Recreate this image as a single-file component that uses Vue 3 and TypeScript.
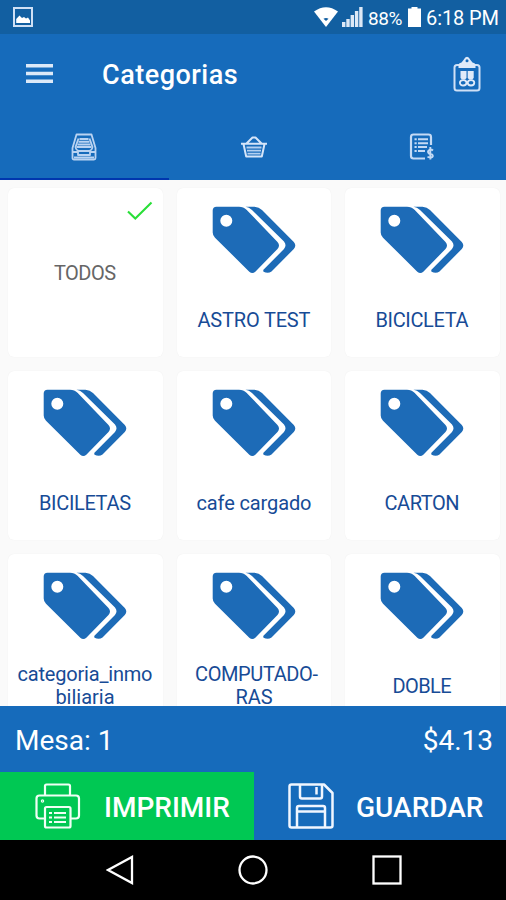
<script setup lang="ts">
interface Category {
  lines: string[]
  width: number
  shift?: number
}

const categories: Category[] = [
  { lines: ['ASTRO TEST'], width: 113 },
  { lines: ['BICICLETA'], width: 93 },
  { lines: ['BICILETAS'], width: 92 },
  { lines: ['cafe cargado'], width: 115 },
  { lines: ['CARTON'], width: 75 },
  { lines: ['categoria_inmo', 'biliaria'], width: 135 },
  { lines: ['COMPUTADO-', 'RAS'], width: 123, shift: 2.5 },
  { lines: ['DOBLE'], width: 59 },
]
</script>

<template>
  <div class="screen">
    <div class="status">
      <svg class="picture" width="20" height="20" viewBox="0 0 20 20">
        <rect x="1" y="1" width="18" height="18" fill="none" stroke="#cfe0f5" stroke-width="2" />
        <path d="M3.2 16V12L6.5 8.5 9 11l2-1 2 1.5 2-1 2 3V16z" fill="#fff" />
      </svg>
      <div class="status-right">
        <svg class="wifi" width="24" height="20" viewBox="0 0 24 20">
          <path d="M0 4.5Q12-4 24 4.5L12 20z" fill="#fff" />
          <path d="M9.5 11.8Q12 10 14.500 11.800L12 14z" fill="#125fa1" />
        </svg>
        <svg class="signal" width="21" height="20" viewBox="0 0 21 20" fill="#dce8f6">
          <path d="M0 15h3.400v5H0zM4.300 12h3.400v8h-3.400zM8.600 8h3.400v12h-3.400zM12.900 4h3.400v16h-3.400zM17.200 0h3.400v20h-3.400z" />
        </svg>
        <span class="percent">88%</span>
        <svg class="battery" width="13" height="20" viewBox="0 0 13 20">
          <path d="M3.500 0h6v1.500H13V20H0V1.500h3.500z" fill="#fff" />
        </svg>
        <span class="clock">6:18 PM</span>
      </div>
    </div>

    <header class="bar">
      <svg class="burger" width="27" height="20" viewBox="0 0 27 20" fill="#dce9f8">
        <path d="M0 0h27v3.400H0zM0 7.800h27v3.400H0zM0 15.600h27V19H0z" />
      </svg>
      <h1>Categorias</h1>
      <svg class="clipboard" width="28" height="36" viewBox="0 0 28 36">
        <rect x="1.500" y="9" width="25" height="25.500" rx="2.500" fill="none" stroke="#cfe0f6" stroke-width="2" />
        <path d="M5.500 12V8.500Q6 7 8.500 6.500L10.500 4Q14-2.500 17.500 4l2 2.500Q22 7 22.500 8.500V12z" fill="#dfeaf9" />
        <circle cx="14" cy="4.800" r="1.500" fill="#166bbb" />
        <path d="M7.500 15h6v7l-1.500 1.500H9L7.500 22zM14.700 15h6v7l-1.500 1.500h-3L14.700 22z" fill="#dfeaf9" />
        <ellipse cx="10.200" cy="26.800" rx="3.300" ry="2.700" fill="none" stroke="#dfeaf9" stroke-width="1.800" />
        <ellipse cx="18" cy="26.800" rx="3.300" ry="2.700" fill="none" stroke="#dfeaf9" stroke-width="1.800" />
      </svg>
    </header>

    <nav class="tabs">
      <div class="tab active">
        <svg width="26" height="28" viewBox="0 0 26 28" fill="none" stroke="#b9d3f2" stroke-width="1.800" stroke-linejoin="round">
          <path d="M5.500 1.500h15L24.500 15v10q0 1.500-1.500 1.500H3q-1.500 0-1.500-1.500V15z" />
          <path d="M8.500 6h9M7.500 8.700h11M6.500 11.400h13M5.500 14h15" stroke-width="2" />
          <path d="M7.500 5.500 4.500 14q.5 4 5 4h7q4.500 0 5-4l-3-8.500M2 19h5v3h12v-3h5M3 24.500h20" />
        </svg>
      </div>
      <div class="tab">
        <svg class="basket" width="28" height="24" viewBox="0 0 28 24" fill="none" stroke="#d5e5f9" stroke-width="2" stroke-linejoin="round">
          <path d="M1 8.800h26M6.500 8.500l6-6h3l6 6M3.500 9l2.700 12.500h15.600L24.500 9" />
          <path d="M6.500 12.500h15M7 15.600h14M7.500 18.700h13" stroke="#b3d0f1" stroke-width="1.800" />
        </svg>
      </div>
      <div class="tab">
        <svg width="26" height="28" viewBox="0 0 26 28" fill="none" stroke="#c4daf5" stroke-width="1.900">
          <path d="M22 12V4q0-2.500-2.500-2.500h-15Q2 1.500 2 4v19q0 2.500 2.500 2.500H16" stroke-width="2.200" />
          <path d="M5.500 6.300h2.200M9 6.300h10M5.500 10.200h2.200M9 10.200h10M5.500 14.100h2.200M9 14.100h9M5.500 18h2.200M9 18h7" stroke-width="2" />
          <path d="M24 17.500q-2-1.700-4-.3t0 3.300q4.200.8 3.800 2.800t-5.300.6M21.300 14v12.500" />
        </svg>
      </div>
    </nav>

    <main class="grid">
      <div class="card all">
        <svg class="check" width="26" height="20" viewBox="0 0 26 20">
          <path d="M1 10.500l7.300 7L24.500 1.500" fill="none" stroke="#29df38" stroke-width="2.100" />
        </svg>
        <svg class="label" width="150" height="46">
          <text x="75" y="30" text-anchor="middle" textLength="62">TODOS</text>
        </svg>
      </div>
      <div v-for="category in categories" :key="category.lines[0]" class="card">
        <svg class="tags" width="84" height="68" viewBox="0 0 84 68" fill="#1d6bb7">
          <path fill-rule="evenodd" d="M4.500.700H27q4.500 0 7.500 3L65.500 36q3 3.700 0 7L43.300 65.700q-3 2.500-6 0L3 31.700Q.700 29.500.700 26.500V4.500Q.700.700 4.500.700zM14.300 8.700a6 6 0 1 0 0 12 6 6 0 0 0 0-12z" />
          <path d="M33.500.700h9q4.500.300 7.500 3.300L81.800 36q3 3.700 0 7L59.500 65.500q-3.500 2.500-8 .2L51.200 64 72 43q3-3.700 0-7.500L40 4Q37 1.200 33.500.700z" />
        </svg>
        <svg class="label" width="150" height="46">
          <text
            v-for="(line, i) in category.lines"
            :key="line"
            :x="i === 0 ? 75 + (category.shift ?? 0) : 75"
            :y="category.lines.length === 1 ? 30 : 18 + i * 23"
            text-anchor="middle"
            :textLength="i === 0 ? category.width : undefined"
          >{{ line }}</text>
        </svg>
      </div>
    </main>

    <section class="total">
      <span>Mesa: 1</span>
      <span>$4.13</span>
    </section>

    <div class="actions">
      <button class="print">
        <svg width="46" height="46" viewBox="0 0 46 46" fill="none" stroke="#f0fff5" stroke-width="2.200" stroke-linejoin="round">
          <path d="M10 12V3q0-1.500 1.500-1.500h22Q35 1.500 35 3v9M10 35.500H4.500q-3 0-3-3V15.500q0-3 3-3h36.500q3 0 3 3v17q0 3-3 3H35" />
          <rect x="10" y="24" width="25.500" height="20.500" rx="1.500" />
          <path d="M14 30h3M19 30h12M14 34.500h3M19 34.500h12M14 39h3M19 39h12" stroke-width="2" />
          <circle cx="7.500" cy="18" r=".6" />
        </svg>
        <span>IMPRIMIR</span>
      </button>
      <button class="save">
        <svg width="46" height="46" viewBox="0 0 46 46" fill="none" stroke="#f0f6ff" stroke-width="2.500" stroke-linejoin="round">
          <path d="M3.500 1.500H36l8.500 8.500v32.500q0 2-2 2h-39q-2 0-2-2v-39q0-2 2-2z" />
          <path d="M12 2v11.500q0 2 2 2h18q2 0 2-2V2M28.500 4v7.500M9 44V25q0-2 2-2h24q2 0 2 2v19M9 28.500h28" />
        </svg>
        <span>GUARDAR</span>
      </button>
    </div>

    <div class="system">
      <svg width="28" height="30" viewBox="0 0 28 30"><path d="M26 2v26L2 15z" /></svg>
      <svg width="30" height="30" viewBox="0 0 30 30"><circle cx="15" cy="15" r="13.500" /></svg>
      <svg width="30" height="30" viewBox="0 0 30 30"><rect x="1.500" y="1.500" width="27" height="27" /></svg>
    </div>
  </div>
</template>

<style>
body {
  margin: 0;
}
</style>

<style scoped>
.screen {
  width: 506px;
  height: 900px;
  display: flex;
  flex-direction: column;
  overflow: hidden;
  background: #fafafa;
  font-family: Roboto, sans-serif;
  color: #fff;
}
svg {
  display: block;
  flex: none;
}
.status {
  flex: none;
  height: 34px;
  box-sizing: border-box;
  padding: 0 7px 0 13px;
  display: flex;
  align-items: center;
  justify-content: space-between;
  background: #125fa1;
}
.status-right {
  display: flex;
  align-items: center;
  white-space: nowrap;
}
.signal {
  margin-left: 4px;
}
.percent {
  width: 35px;
  margin: 2px 0 0 5px;
  font-size: 19px;
  letter-spacing: -0.400px;
}
.battery {
  margin-left: 5px;
}
.clock {
  width: 73px;
  margin: 2px 0 0 5px;
  font-size: 20px;
  letter-spacing: -0.100px;
}
.bar {
  flex: none;
  height: 81px;
  box-sizing: border-box;
  padding: 0 25px 0 26px;
  display: flex;
  align-items: center;
  background: #166bbb;
}
.burger {
  margin-bottom: 1px;
}
h1 {
  flex: 1;
  margin: 0 0 0 49px;
  font-size: 27px;
  font-weight: 500;
  line-height: 32px;
  letter-spacing: 0.500px;
}
.clipboard {
  margin-bottom: 2px;
}
.tabs {
  flex: none;
  height: 65px;
  display: grid;
  grid-template-columns: repeat(3, 1fr);
  background: #166bbb;
}
.tab {
  box-sizing: border-box;
  display: flex;
  align-items: center;
  justify-content: center;
  border-bottom: 2px solid transparent;
}
.basket {
  margin-left: 2px;
}
.active {
  border-color: #0036ae;
}
.grid {
  flex: none;
  height: 526px;
  box-sizing: border-box;
  padding: 8px 6px 0 8px;
  display: grid;
  grid-template-columns: repeat(3, 154.500px);
  grid-auto-rows: 169px;
  gap: 14px;
  overflow: hidden;
}
.card {
  position: relative;
  display: flex;
  flex-direction: column;
  align-items: center;
  border-radius: 6px;
  background: #fff;
  box-shadow: 0 0 1px rgba(0, 0, 0, 0.080);
}
.all {
  justify-content: center;
}
.check {
  position: absolute;
  top: 13px;
  right: 10px;
}
.tags {
  margin-top: 18px;
}
.label {
  margin-top: 23px;
  font-size: 20px;
  fill: #174b96;
  overflow: visible;
}
.all .label {
  margin-top: 0;
  fill: #666;
}
.total {
  flex: none;
  height: 66px;
  box-sizing: border-box;
  padding: 3px 13px 0 15px;
  display: flex;
  align-items: center;
  justify-content: space-between;
  background: #166bbb;
  font-size: 28px;
}
.actions {
  flex: none;
  height: 68px;
  display: grid;
  grid-template-columns: 254px 252px;
}
button {
  margin: 0;
  border: 0;
  padding: 0 0 0 35px;
  display: flex;
  align-items: center;
  color: #fff;
  font: 500 28px Roboto, sans-serif;
}
button span {
  margin: 2px 0 0 23px;
}
.print {
  background: #00c853;
}
.save {
  background: #166bbb;
  padding-left: 34px;
}
.save span {
  margin-left: 22px;
}
.system {
  flex: none;
  height: 60px;
  box-sizing: border-box;
  padding: 0 104px 0 106px;
  display: flex;
  align-items: center;
  justify-content: space-between;
  background: #000;
}
.system svg {
  fill: none;
  stroke: #fff;
  stroke-width: 2.300;
}
</style>
